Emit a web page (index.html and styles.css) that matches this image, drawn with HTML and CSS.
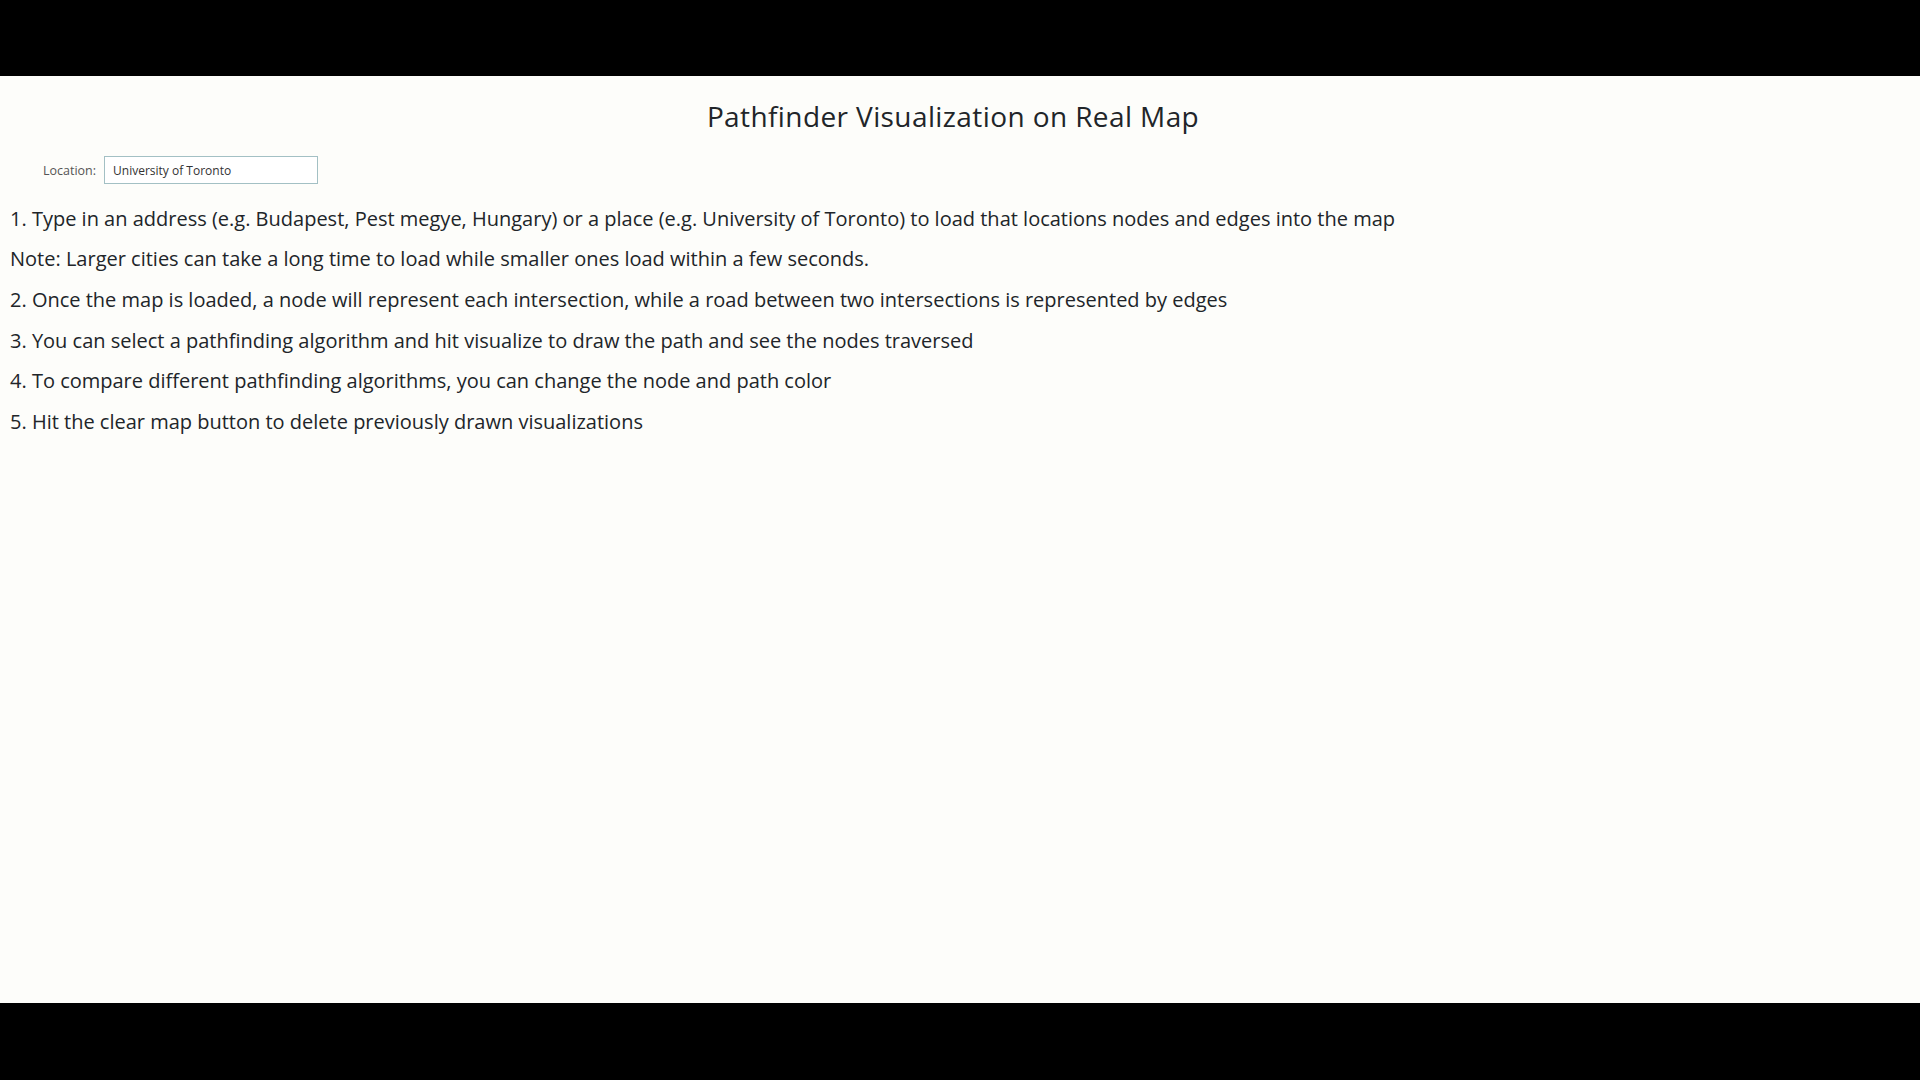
FILE: index.html
```html
<!DOCTYPE html>
<html lang="en">
<head>
<meta charset="utf-8">
<title>Pathfinder Visualization on Real Map</title>
<link rel="stylesheet" href="styles.css">
</head>
<body>
<div class="frame">
  <div class="letterbox"></div>
  <main class="page">
    <h1 class="title">Pathfinder Visualization on Real Map</h1>
    <div class="location-row">
      <label class="location-label" for="loc">Location:</label>
      <input class="location-input" id="loc" type="text" value="University of Toronto">
    </div>
    <div class="instructions">
      <p>1. Type in an address (e.g. Budapest, Pest megye, Hungary) or a place (e.g. University of Toronto) to load that locations nodes and edges into the map</p>
      <p>Note: Larger cities can take a long time to load while smaller ones load within a few seconds.</p>
      <p>2. Once the map is loaded, a node will represent each intersection, while a road between two intersections is represented by edges</p>
      <p>3. You can select a pathfinding algorithm and hit visualize to draw the path and see the nodes traversed</p>
      <p>4. To compare different pathfinding algorithms, you can change the node and path color</p>
      <p>5. Hit the clear map button to delete previously drawn visualizations</p>
    </div>
  </main>
  <div class="letterbox bottom"></div>
</div>
</body>
</html>
```
FILE: styles.css
```css
html, body {
  margin: 0;
  padding: 0;
  background: #000;
}
.frame {
  display: flex;
  flex-direction: column;
  height: 1080px;
}
.letterbox {
  height: 76px;
  background: #000;
  flex: none;
}
.letterbox.bottom {
  height: 77px;
}
.page {
  flex: 1;
  background: #fdfdfa;
  color: #212529;
  font-family: "Open Sans", "Noto Sans", sans-serif;
  padding: 0 8px;
  overflow: hidden;
}
.title {
  margin: 22px 0 0;
  text-align: center;
  font-size: 28px;
  letter-spacing: 0.4px;
  font-weight: 400;
  line-height: 36px;
  padding-right: 14px;
}
.location-row {
  display: flex;
  align-items: center;
  gap: 8px;
  margin: 22px 0 0 35px;
}
.location-label {
  font-size: 12.5px;
  color: #555;
}
.location-input {
  width: 201px;
  height: 24px;
  box-sizing: content-box;
  padding: 1px 3px 1px 8px;
  border: 1px solid #a3c0c4;
  font-family: inherit;
  font-size: 12px;
  color: #333;
  background: #fff;
  outline: none;
}
.instructions {
  display: flex;
  flex-direction: column;
  gap: 16.7px;
  margin-top: 22.5px;
  padding-left: 2px;
}
.instructions p {
  margin: 0;
  font-size: 20px;
  line-height: 24px;
}
```
